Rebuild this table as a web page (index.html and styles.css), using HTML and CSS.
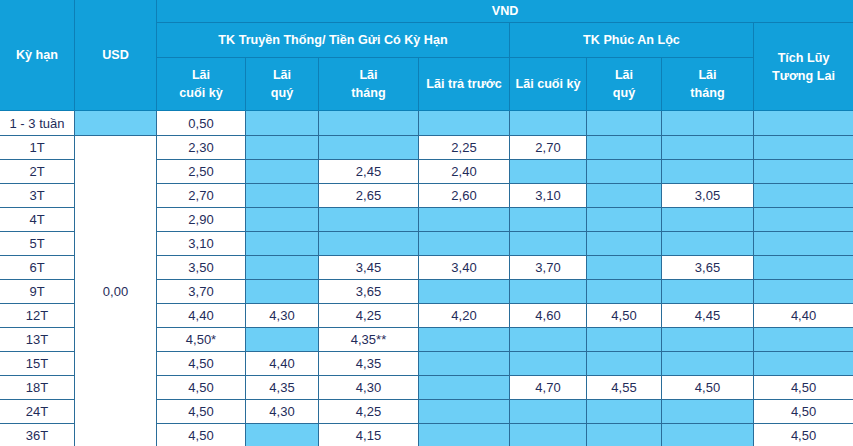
FILE: index.html
```html
<!DOCTYPE html>
<html lang="vi">
<head>
<meta charset="utf-8">
<title>Lãi suất</title>
<link rel="stylesheet" href="styles.css">
</head>
<body>
<table class="rates">
  <colgroup>
    <col class="w74"><col class="w82"><col class="w89"><col class="w73"><col class="w100"><col class="w91"><col class="w77"><col class="w75"><col class="w92"><col class="w100b">
  </colgroup>
  <thead>
    <tr class="h1">
      <th rowspan="3">Kỳ hạn</th>
      <th rowspan="3">USD</th>
      <th colspan="8">VND</th>
    </tr>
    <tr class="h2">
      <th colspan="4">TK Truyền Thống/ Tiền Gửi Có Kỳ Hạn</th>
      <th colspan="3">TK Phúc An Lộc</th>
      <th rowspan="2" class="tl">Tích Lũy<br>Tương Lai</th>
    </tr>
    <tr class="h3">
      <th>Lãi<br>cuối kỳ</th>
      <th>Lãi<br>quý</th>
      <th>Lãi<br>tháng</th>
      <th>Lãi trả trước</th>
      <th>Lãi cuối kỳ</th>
      <th>Lãi<br>quý</th>
      <th>Lãi<br>tháng</th>
    </tr>
  </thead>
  <tbody>
    <tr class="first"><td>1 - 3 tuần</td><td class="e"></td><td>0,50</td><td class="e"></td><td class="e"></td><td class="e"></td><td class="e"></td><td class="e"></td><td class="e"></td><td class="e"></td></tr>
    <tr><td>1T</td><td rowspan="13" class="usd">0,00</td><td>2,30</td><td class="e"></td><td class="e"></td><td>2,25</td><td>2,70</td><td class="e"></td><td class="e"></td><td class="e"></td></tr>
    <tr><td>2T</td><td>2,50</td><td class="e"></td><td>2,45</td><td>2,40</td><td class="e"></td><td class="e"></td><td class="e"></td><td class="e"></td></tr>
    <tr><td>3T</td><td>2,70</td><td class="e"></td><td>2,65</td><td>2,60</td><td>3,10</td><td class="e"></td><td>3,05</td><td class="e"></td></tr>
    <tr><td>4T</td><td>2,90</td><td class="e"></td><td class="e"></td><td class="e"></td><td class="e"></td><td class="e"></td><td class="e"></td><td class="e"></td></tr>
    <tr><td>5T</td><td>3,10</td><td class="e"></td><td class="e"></td><td class="e"></td><td class="e"></td><td class="e"></td><td class="e"></td><td class="e"></td></tr>
    <tr><td>6T</td><td>3,50</td><td class="e"></td><td>3,45</td><td>3,40</td><td>3,70</td><td class="e"></td><td>3,65</td><td class="e"></td></tr>
    <tr><td>9T</td><td>3,70</td><td class="e"></td><td>3,65</td><td class="e"></td><td class="e"></td><td class="e"></td><td class="e"></td><td class="e"></td></tr>
    <tr><td>12T</td><td>4,40</td><td>4,30</td><td>4,25</td><td>4,20</td><td>4,60</td><td>4,50</td><td>4,45</td><td>4,40</td></tr>
    <tr><td>13T</td><td>4,50*</td><td class="e"></td><td>4,35**</td><td class="e"></td><td class="e"></td><td class="e"></td><td class="e"></td><td class="e"></td></tr>
    <tr><td>15T</td><td>4,50</td><td>4,40</td><td>4,35</td><td class="e"></td><td class="e"></td><td class="e"></td><td class="e"></td><td class="e"></td></tr>
    <tr><td>18T</td><td>4,50</td><td>4,35</td><td>4,30</td><td class="e"></td><td>4,70</td><td>4,55</td><td>4,50</td><td>4,50</td></tr>
    <tr><td>24T</td><td>4,50</td><td>4,30</td><td>4,25</td><td class="e"></td><td class="e"></td><td class="e"></td><td class="e"></td><td>4,50</td></tr>
    <tr><td>36T</td><td>4,50</td><td class="e"></td><td>4,15</td><td class="e"></td><td class="e"></td><td class="e"></td><td class="e"></td><td>4,50</td></tr>
  </tbody>
</table>
</body>
</html>
```

FILE: styles.css
```css
html, body {
  margin: 0;
  padding: 0;
  background: #ffffff;
}

.rates {
  width: 854px;
  border-collapse: collapse;
  table-layout: fixed;
  font-family: "Liberation Sans", Arial, sans-serif;
  color: #1f2c5a;
  margin: -1px 0 0 -1px;
}

.w74 { width: 75px; }
.w82 { width: 82px; }
.w89 { width: 89px; }
.w73 { width: 73px; }
.w100 { width: 100px; }
.w91 { width: 91px; }
.w77 { width: 77px; }
.w75 { width: 75px; }
.w92 { width: 92px; }
.w100b { width: 100px; }

.rates th {
  background: #12a0da;
  color: #ffffff;
  font-weight: bold;
  font-size: 12.6px;
  line-height: 18px;
  border: 1px solid #0d7fb6;
  padding: 0;
  text-align: center;
  vertical-align: middle;
}

.rates th.tl {
  vertical-align: top;
  padding-top: 26px;
}

.h1 { height: 23px; }
.h2 { height: 35px; }
.h3 { height: 53px; }

.rates td {
  background: #ffffff;
  border: 1px solid #2a6d99;
  height: 23px;
  padding: 0;
  font-size: 13px;
  text-align: center;
  vertical-align: middle;
}

.rates tr.first td { height: 24px; }

.rates td.e { background: #6dcff6; }

.rates td.usd { vertical-align: middle; }
```
